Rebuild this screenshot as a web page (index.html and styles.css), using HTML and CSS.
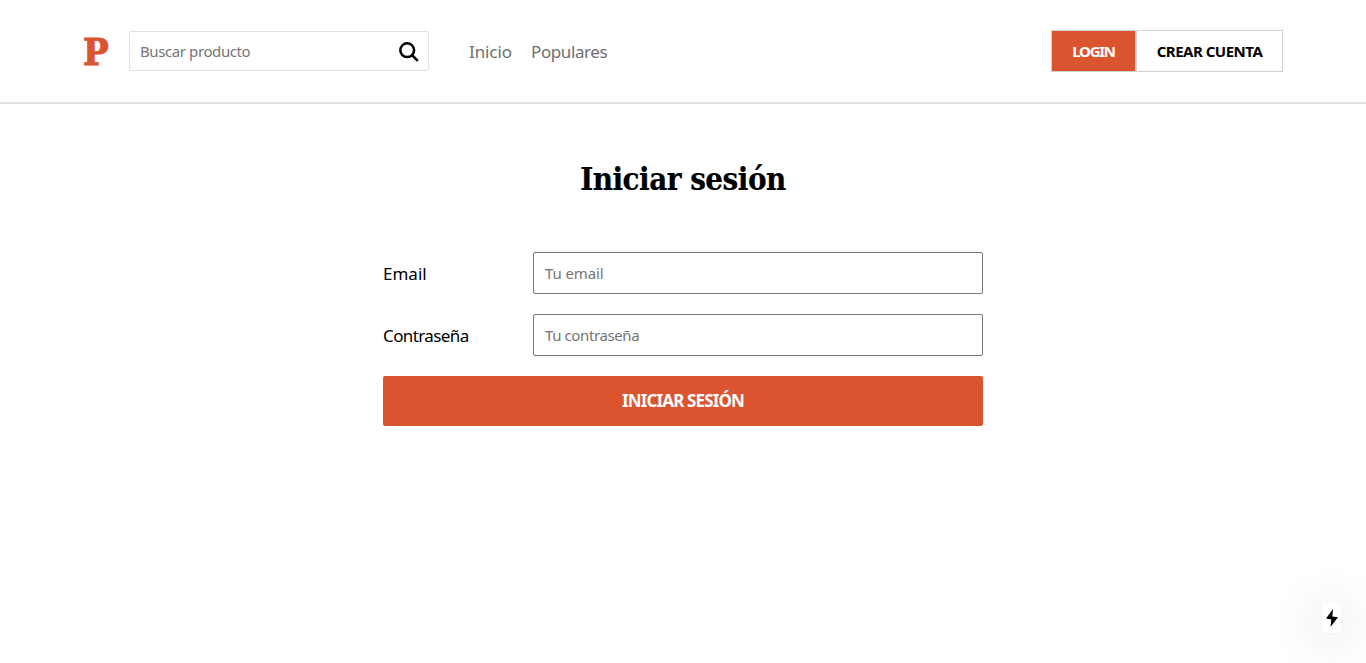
FILE: index.html
```html
<!DOCTYPE html>
<html lang="es">
<head>
<meta charset="utf-8">
<title>Iniciar sesión</title>
<link rel="stylesheet" href="styles.css">
</head>
<body>
<header class="header">
  <div class="header-inner">
    <div class="header-left">
      <a class="logo">P</a>
      <form class="search">
        <input class="search-input" type="text" placeholder="Buscar producto">
        <button class="search-button" type="button" aria-label="Buscar"><svg viewBox="0 0 20 20"><circle cx="8.2" cy="8.2" r="6.9"/><path d="M13 13l5.8 5.8"/></svg></button>
      </form>
      <nav class="nav"><a class="nav-home">Inicio</a><a class="nav-popular">Populares</a></nav>
    </div>
    <div class="account"><a class="button button-primary">LOGIN</a><a class="button button-plain">CREAR CUENTA</a></div>
  </div>
</header>
<main class="main">
  <h1 class="title">Iniciar sesión</h1>
  <form class="form">
    <div class="field"><label for="email">Email</label><input class="input-email" id="email" type="email" placeholder="Tu email"></div>
    <div class="field"><label class="label-password" for="password">Contraseña</label><input id="password" type="password" placeholder="Tu contraseña"></div>
    <button class="submit" type="button">INICIAR SESIÓN</button>
  </form>
</main>
<div class="badge"><svg viewBox="0 0 12 18"><path d="M7 0L0 9.6L5.3 10.4L4.5 18L12 8.2L6.4 7.4Z"/></svg></div>
</body>
</html>
```
FILE: styles.css
```css
* { box-sizing: border-box; }
body {
  margin: 0;
  background: #fff;
  color: #000;
  font-family: "Noto Sans", sans-serif;
  font-size: 17px;
}
input, button { font: inherit; }
.header { height: 104px; border-bottom: 2px solid #e1e1e1; }
.header-inner {
  width: 1200px;
  height: 102px;
  margin: 0 auto;
  display: flex;
  align-items: center;
  justify-content: space-between;
}
.header-left { display: flex; align-items: center; }
.logo {
  width: 46px;
  padding-top: 2px;
  color: #da552f;
  font: bold 38px/40px "DejaVu Serif", serif;
  font-stretch: condensed;
  -webkit-text-stroke: 1px #da552f;
}
.search {
  width: 300px;
  height: 40px;
  display: flex;
  align-items: center;
  border: 1px solid #e1e1e1;
  border-radius: 2px;
}
.search-input {
  flex: 1;
  min-width: 0;
  padding: 0 10px;
  border: 0;
  font-size: 15px;
  letter-spacing: -0.4px;
}
::placeholder { color: #757575; }
.search-button {
  width: 39px;
  height: 38px;
  padding: 1px 0 0;
  display: flex;
  align-items: center;
  justify-content: center;
  border: 0;
  background: none;
}
.search-button svg { width: 20px; height: 20px; fill: none; stroke: #000; stroke-width: 2.5; }
.nav { display: flex; gap: 20px; margin-left: 40px; color: #6f6f6f; white-space: nowrap; }
.nav-home { width: 42px; letter-spacing: -0.1px; }
.nav-popular { letter-spacing: -0.4px; }
.account { display: flex; }
.button {
  height: 42px;
  display: flex;
  align-items: center;
  justify-content: center;
  border: 1px solid #d1d1d1;
  font-size: 15px;
  font-weight: 700;
  white-space: nowrap;
}
.button-primary { width: 85px; background: #da552f; color: #fff; letter-spacing: -1.3px; }
.button-plain { width: 147px; letter-spacing: -0.5px; }
.title {
  margin: 50px 0 0;
  text-align: center;
  font: bold 31px/50px "DejaVu Serif", serif;
  font-stretch: condensed;
  letter-spacing: -0.5px;
  -webkit-text-stroke: 0.2px #000;
}
.form { width: 600px; margin: 48px auto 0; }
.field { display: flex; align-items: center; margin-bottom: 20px; }
.field label { width: 150px; }
.field .label-password { letter-spacing: -0.6px; }
.field input {
  width: 450px;
  height: 42px;
  padding: 0 11px;
  border: 1px solid #767676;
  border-radius: 2px;
  font-size: 15px;
  letter-spacing: -0.4px;
}
.field .input-email { letter-spacing: -0.1px; }
.submit {
  display: block;
  width: 100%;
  height: 50px;
  padding: 0 0 1px;
  border: 0;
  border-radius: 2px;
  background: #da552f;
  color: #fff;
  font-weight: 700;
  letter-spacing: -0.85px;
}
.badge {
  position: fixed;
  right: 25px;
  bottom: 30px;
  width: 19px;
  height: 31px;
  display: flex;
  align-items: center;
  justify-content: center;
  border-radius: 3px;
  background: #fff;
  box-shadow: 0 0 3px rgba(0,0,0,.05), 0 6px 48px rgba(0,0,0,.22);
}
.badge svg { width: 12px; height: 18px; }
```
